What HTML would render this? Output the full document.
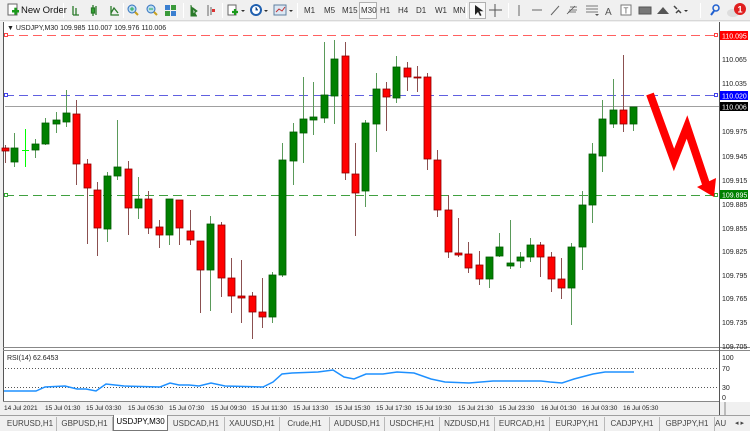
<!DOCTYPE html>
<html><head><meta charset="utf-8"><style>
*{margin:0;padding:0;box-sizing:border-box}
body{width:750px;height:430px;overflow:hidden;background:#f0f0f0;font-family:"Liberation Sans",sans-serif;position:relative}
.tb{position:absolute;top:0;left:0;width:750px;height:21px;background:#f0f0f0;border-bottom:1px solid #d8d8d8}
.t{position:absolute;font-size:8px;color:#333;top:6px}
.sep{position:absolute;top:3px;width:1px;height:15px;background:#c8c8c8;border-right:1px solid #fff}
svg{position:absolute;left:0;top:0}
.tabs{position:absolute;left:0;top:415px;width:750px;height:15px;background:#f0f0f0;border-top:1px solid #a0a0a0}
.tab{position:absolute;top:1px;height:14px;font-size:8px;color:#444;text-align:center;line-height:13px;border-right:1px solid #b8b8b8}
.pb{position:absolute;top:2px;height:17px;background:rgba(255,255,255,0.6);border:1px solid #b0b0b0}
</style></head><body>
<div class="tb">
 <div class="pb" style="left:359px;width:18px"></div>
 <div class="pb" style="left:469px;width:17px"></div>
 <svg width="750" height="21">
  <rect x="8" y="4" width="9" height="11" fill="#fff" stroke="#666"/><rect x="12" y="10" width="7" height="2.5" fill="#1a9a1a"/><rect x="14.3" y="7.7" width="2.5" height="7" fill="#1a9a1a"/>
  <g stroke="#2a7a2a" stroke-width="1.3" fill="none"><path d="M73 6v9M76 8v7M73 15h6"/><path d="M93 5v11M96 6v9"/><rect x="91.5" y="8" width="3" height="5" fill="#3a3"/><path d="M111 6v9h8M111 13l3-5 4 5"/></g>
  <circle cx="132" cy="9" r="4" fill="#bde" stroke="#3070c0"/><path d="M135 12l3 3" stroke="#c8a020" stroke-width="2"/><path d="M130 9h4M132 7v4" stroke="#2a5"/>
  <circle cx="151" cy="9" r="4" fill="#bde" stroke="#3070c0"/><path d="M154 12l3 3" stroke="#c8a020" stroke-width="2"/><path d="M149 9h4" stroke="#2a5"/>
  <rect x="165" y="5" width="5" height="5" fill="#3a7fd0"/><rect x="171" y="5" width="5" height="5" fill="#3a9a3a"/><rect x="165" y="11" width="5" height="5" fill="#3a9a3a"/><rect x="171" y="11" width="5" height="5" fill="#3a7fd0"/>
  <path d="M191 5v11h6M193 8l4 3-4 3z" stroke="#2a7a2a" fill="#2a7a2a"/>
  <path d="M208 5v11M211 7v8" stroke="#666"/><rect x="212" y="9" width="3" height="3" fill="#d33"/>
  <rect x="228" y="5" width="8" height="10" fill="#fff" stroke="#666"/><path d="M232 12h6M235 9v6" stroke="#1a9a1a" stroke-width="2.2"/><path d="M241 10l2 2 2-2z" fill="#333"/>
  <circle cx="256" cy="10" r="5" fill="#fff" stroke="#2060b0" stroke-width="2"/><path d="M256 7v3h2" stroke="#2060b0"/><path d="M264 10l2 2 2-2z" fill="#333"/>
  <rect x="274" y="5" width="12" height="10" fill="#dde8f4" stroke="#6080a0"/><path d="M276 12l3-3 3 2 3-4" stroke="#c03030" fill="none"/><path d="M289 10l2 2 2-2z" fill="#333"/>
  <path d="M475 5v10l3-3 2 4 1.5-.8-2-4h4z" fill="#222"/>
  <path d="M495 4v13M489 10h13" stroke="#555"/>
  <path d="M519 5v11" stroke="#666"/><path d="M532 10h10" stroke="#666"/><path d="M551 15l8-9" stroke="#666"/>
  <path d="M567 14l8-8M569 10h8M568 12h8M570 7h7" stroke="#555" stroke-width=".8"/>
  <path d="M586 6h12M586 9h12M586 12h12" stroke="#777"/><path d="M595 14l2 2 2-2z" fill="#555"/>
  <text x="605" y="15" font-size="10" fill="#555" font-family="Liberation Sans">A</text>
  <rect x="621" y="5" width="10" height="10" fill="#fff" stroke="#777"/><text x="623.5" y="13.5" font-size="8" fill="#555" font-family="Liberation Sans">T</text>
  <rect x="639" y="7" width="12" height="7" fill="#777" stroke="#555"/>
  <path d="M657 14l6-7 6 7z" fill="#555"/>
  <path d="M674 6l3 3M678 10l3 3M676 13l3-3" stroke="#444" stroke-width="1.5"/><path d="M684 10l2 2 2-2z" fill="#333"/>
  <circle cx="716" cy="8" r="3" fill="none" stroke="#2060d0" stroke-width="1.5"/><path d="M714 11l-3 4" stroke="#2060d0" stroke-width="2"/>
  <ellipse cx="733" cy="13" rx="6" ry="4" fill="#ddd"/><circle cx="740" cy="9" r="6" fill="#e02020"/><text x="737.5" y="12.5" font-size="9" fill="#fff" font-weight="bold" font-family="Liberation Sans">1</text>
 </svg>
 <div class="t" style="left:21px;font-size:9.5px;top:5px;color:#111">New Order</div>
 <div class="sep" style="left:63px"></div><div class="sep" style="left:123px"></div><div class="sep" style="left:183px"></div><div class="sep" style="left:222px"></div><div class="sep" style="left:297px"></div>
 <div class="t" style="left:304px">M1</div><div class="t" style="left:324px">M5</div><div class="t" style="left:342px">M15</div>
 <div class="t" style="left:361px">M30</div><div class="t" style="left:380px">H1</div><div class="t" style="left:398px">H4</div><div class="t" style="left:416px">D1</div><div class="t" style="left:435px">W1</div><div class="t" style="left:453px">MN</div>
 <div class="sep" style="left:466px"></div>
 <div class="sep" style="left:508px"></div><div class="sep" style="left:700px"></div>
</div>

<svg width="750" height="415" style="top:0" id="ch">
 <rect x="0" y="21" width="750" height="394" fill="#f0f0f0"/>
 <rect x="3" y="22" width="747" height="380" fill="#fff"/>
 <path d="M3.5 22v380" stroke="#555"/>
 <path d="M3 347.5h747M3 350.5h747M3 401.5h716" stroke="#888"/>
 <path d="M719.5 22v393" stroke="#555"/>
 <path d="M725 402v13" stroke="#888"/>
 <path d="M811 24l4 4 4-4z" fill="#5a6a8a"/>
 <path d="M5 35.5h712" stroke="#ff6060" stroke-dasharray="9,5"/>
 <path d="M5 95.5h712" stroke="#6060e0" stroke-dasharray="9,5"/>
 <path d="M5 106.5h714" stroke="#a0a0a0"/>
 <path d="M5 195.5h712" stroke="#40a040" stroke-dasharray="9,5"/>
 <rect x="4.5" y="33.5" width="3" height="3" fill="#fff" stroke="#f44"/><rect x="714.5" y="33.5" width="3" height="3" fill="#fff" stroke="#f44"/>
 <rect x="4.5" y="93.5" width="3" height="3" fill="#fff" stroke="#44e"/><rect x="714.5" y="93.5" width="3" height="3" fill="#fff" stroke="#44e"/>
 <rect x="4.5" y="193.5" width="3" height="3" fill="#fff" stroke="#3a3"/><rect x="714.5" y="193.5" width="3" height="3" fill="#fff" stroke="#3a3"/>
 <g id="cd"></g>
 <path d="M650 94L674 160L687 127L706 184" stroke="#ff0000" stroke-width="8" fill="none" stroke-linejoin="miter"/>
 <path d="M697 187L714 197L716 178z" fill="#ff0000"/>
 <g font-family="Liberation Sans" font-size="7" fill="#222">
  <text x="7" y="30">▼ USDJPY,M30  109.985 110.007 109.976 110.006</text>
  <text x="722" y="62">110.065</text><text x="722" y="86">110.035</text><text x="722" y="134">109.975</text><text x="722" y="159">109.945</text><text x="722" y="183">109.915</text><text x="722" y="207">109.885</text><text x="722" y="231">109.855</text><text x="722" y="254">109.825</text><text x="722" y="278">109.795</text><text x="722" y="301">109.765</text><text x="722" y="325">109.735</text><text x="722" y="349">109.705</text>
  <text x="7" y="360">RSI(14) 62.6453</text>
  <text x="722" y="360">100</text><text x="722" y="371">70</text><text x="722" y="390">30</text><text x="722" y="400">0</text>
 </g>
 <rect x="720" y="31" width="28" height="9" fill="#ff0000"/><rect x="720" y="91" width="28" height="9" fill="#0000ff"/><rect x="720" y="102" width="28" height="9" fill="#000"/><rect x="720" y="190" width="28" height="9" fill="#008000"/>
 <g font-family="Liberation Sans" font-size="7" fill="#fff">
  <text x="722" y="38.5">110.095</text><text x="722" y="98.5">110.020</text><text x="722" y="109.5">110.006</text><text x="722" y="197.5">109.895</text>
 </g>
 <path d="M5 368.5h712M5 387.5h712" stroke="#555" stroke-dasharray="1,2"/>
 <polyline fill="none" stroke="#1e90ff" stroke-width="1.5" points="4,391 36,391 45,387 65,386 77,389 86,389 96,391 106,384 124,386 160,387 170,383 179,385 189,385 199,386 211,383 225,386 263,387 273,382 282,374 292,373 318,372 333,370 344,377 354,379 366,374 383,374 397,372 414,373 431,379 445,382 469,383 493,381 522,381 541,381 550,382 562,383 574,379 593,374 605,372 617,372 634,372"/>
 <g font-family="Liberation Sans" font-size="6.5" fill="#222">
  <text x="4" y="410">14 Jul 2021</text><text x="45" y="410">15 Jul 01:30</text><text x="86" y="410">15 Jul 03:30</text><text x="128" y="410">15 Jul 05:30</text><text x="169" y="410">15 Jul 07:30</text><text x="211" y="410">15 Jul 09:30</text><text x="252" y="410">15 Jul 11:30</text><text x="293" y="410">15 Jul 13:30</text><text x="335" y="410">15 Jul 15:30</text><text x="376" y="410">15 Jul 17:30</text><text x="416" y="410">15 Jul 19:30</text><text x="458" y="410">15 Jul 21:30</text><text x="499" y="410">15 Jul 23:30</text><text x="541" y="410">16 Jul 01:30</text><text x="582" y="410">16 Jul 03:30</text><text x="623" y="410">16 Jul 05:30</text>
 </g>
</svg>

<div class="tabs">
 <div class="tab" style="left:4px;width:53px">EURUSD,H1</div>
 <div class="tab" style="left:57px;width:56px">GBPUSD,H1</div>
 <div class="tab" style="left:113px;width:55px;background:#fff;top:-1px;height:16px;border:1px solid #777;border-top:none;color:#000">USDJPY,M30</div>
 <div class="tab" style="left:168px;width:57px">USDCAD,H1</div>
 <div class="tab" style="left:225px;width:55px">XAUUSD,H1</div>
 <div class="tab" style="left:280px;width:50px">Crude,H1</div>
 <div class="tab" style="left:330px;width:55px">AUDUSD,H1</div>
 <div class="tab" style="left:385px;width:55px">USDCHF,H1</div>
 <div class="tab" style="left:440px;width:55px">NZDUSD,H1</div>
 <div class="tab" style="left:495px;width:55px">EURCAD,H1</div>
 <div class="tab" style="left:550px;width:55px">EURJPY,H1</div>
 <div class="tab" style="left:605px;width:55px">CADJPY,H1</div>
 <div class="tab" style="left:660px;width:55px">GBPJPY,H1</div>
 <div class="tab" style="left:715px;width:14px;border:none;text-align:left;overflow:hidden">AU</div>
 <div class="tab" style="left:729px;width:21px;border:none;font-size:7px">◂ ▸</div>
</div>
<script>
var C=[[5,148,151,145,163,0],[14,148,162,133,167,1],[25,150,150,129,167,2],[35,144,150,139,158,1],[45,123,144,118,145,1],[56,120,124,112,133,1],[66,113,122,90,127,1],[76,114,164,100,185,0],[87,164,188,159,244,0],[97,190,228,182,256,0],[107,176,229,172,242,1],[117,167,176,120,180,1],[128,169,208,161,235,0],[138,199,208,177,219,1],[148,199,228,191,234,0],[159,227,235,220,248,0],[169,199,235,199,245,1],[179,200,228,200,245,0],[190,231,240,210,245,0],[200,241,270,241,313,0],[210,224,270,216,311,1],[221,225,278,222,297,0],[231,278,296,258,313,0],[241,296,298,260,323,0],[252,296,312,292,339,0],[262,312,317,278,328,0],[272,275,317,272,323,1],[282,160,275,143,277,1],[293,132,161,123,185,1],[303,119,133,77,163,1],[313,117,120,82,135,1],[324,95,118,42,123,1],[334,59,96,40,124,1],[345,56,173,42,180,0],[355,174,193,143,236,0],[365,123,191,120,207,1],[376,89,124,73,152,1],[386,89,97,82,131,0],[396,67,98,56,103,1],[407,68,77,62,91,0],[417,77,78,66,92,0],[427,77,159,73,170,0],[437,160,210,150,217,0],[448,210,252,195,258,0],[458,253,255,218,257,0],[468,254,268,242,273,0],[479,265,279,251,285,0],[489,257,279,257,288,1],[499,247,256,233,257,1],[510,263,266,220,269,1],[520,257,261,252,268,1],[530,245,257,238,262,1],[540,245,257,242,277,0],[551,257,279,252,292,0],[561,279,288,258,299,0],[571,247,288,243,325,1],[582,205,247,191,270,1],[592,154,205,143,223,1],[602,119,156,100,172,1],[613,110,124,79,128,1],[623,110,124,55,132,0],[633,107,124,107,131,1]];
var s="";C.forEach(function(c){var x=c[0],t=c[1],b=c[2],h=c[3],l=c[4],g=c[5];
var wc=g==2?"#00ff00":g?"#5a9a5a":"#8b5050";
s+='<path d="M'+(x+.5)+' '+h+'V'+l+'" stroke="'+wc+'"/>';
if(g==2){s+='<path d="M'+(x-3)+' '+(t+.5)+'h7" stroke="#00ff00"/>';return;}
var hh=Math.max(b-t,1);
s+='<rect x="'+(x-3)+'" y="'+t+'" width="7" height="'+hh+'" fill="'+(g?"#008000":"#ff0000")+'" stroke="'+(g?"#005a00":"#900000")+'" stroke-width=".8"/>';});
document.getElementById("cd").innerHTML=s;
</script>
</body></html>
